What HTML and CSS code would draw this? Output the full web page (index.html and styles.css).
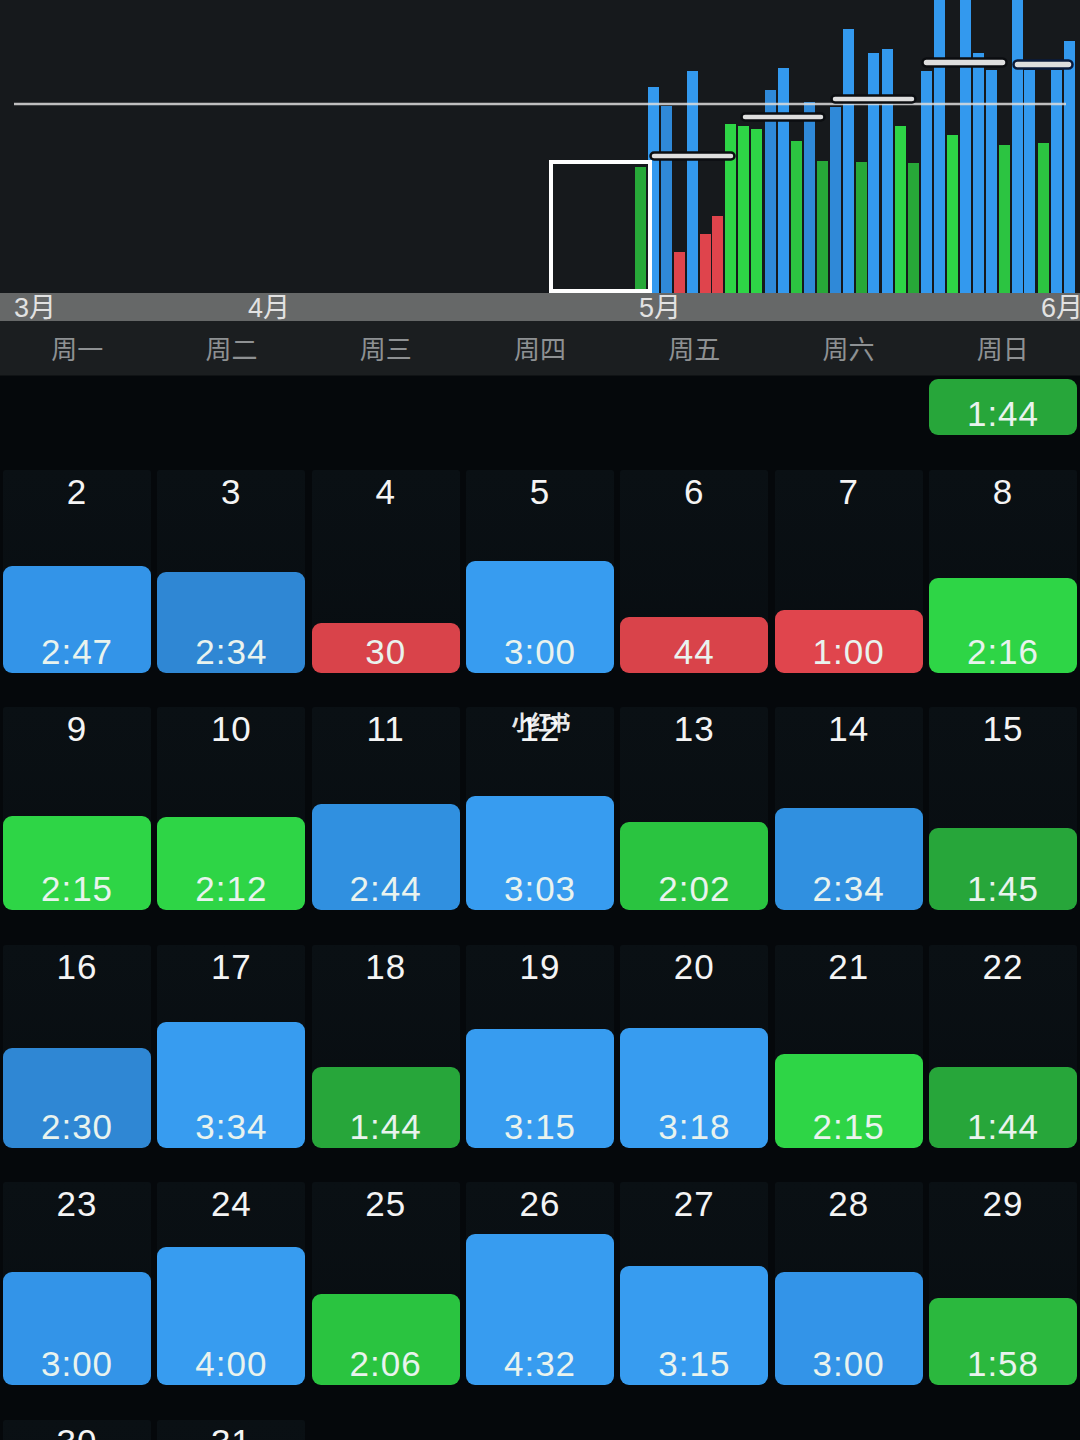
FILE: index.html
```html
<!DOCTYPE html>
<html lang="zh">
<head>
<meta charset="utf-8">
<title>Calendar</title>
<link rel="stylesheet" href="styles.css">
</head>
<body>
<div class="app">
  <div class="chart">
    <svg width="1080" height="293" viewBox="0 0 1080 293" xmlns="http://www.w3.org/2000/svg">
      <rect x="0" y="0" width="1080" height="293" fill="#16191c"/>
      <g>
        <rect x="635" y="167" width="11" height="126" fill="#27a838"/>
        <rect x="648" y="87" width="11" height="206" fill="#3399ee"/>
        <rect x="661" y="106" width="11" height="187" fill="#2f89d8"/>
        <rect x="674" y="252" width="11" height="41" fill="#df444c"/>
        <rect x="687" y="71" width="11" height="222" fill="#3399ee"/>
        <rect x="700" y="234" width="11" height="59" fill="#df444c"/>
        <rect x="712" y="216" width="11" height="77" fill="#df444c"/>
        <rect x="725" y="124" width="11" height="169" fill="#2ed546"/>
        <rect x="738" y="126" width="11" height="167" fill="#2ed546"/>
        <rect x="751" y="129" width="11" height="164" fill="#2ed546"/>
        <rect x="765" y="90" width="11" height="203" fill="#2f89d8"/>
        <rect x="778" y="68" width="11" height="225" fill="#3399ee"/>
        <rect x="791" y="141" width="11" height="152" fill="#2cc441"/>
        <rect x="804" y="102" width="11" height="191" fill="#2f89d8"/>
        <rect x="817" y="161" width="11" height="132" fill="#27a838"/>
        <rect x="830" y="107" width="11" height="186" fill="#2f89d8"/>
        <rect x="843" y="29" width="11" height="264" fill="#3399ee"/>
        <rect x="856" y="162" width="11" height="131" fill="#27a838"/>
        <rect x="868" y="53" width="11" height="240" fill="#3399ee"/>
        <rect x="882" y="49" width="11" height="244" fill="#3399ee"/>
        <rect x="895" y="126" width="11" height="167" fill="#2ed546"/>
        <rect x="908" y="163" width="11" height="130" fill="#27a838"/>
        <rect x="921" y="71" width="11" height="222" fill="#3399ee"/>
        <rect x="934" y="0" width="11" height="293" fill="#3399ee"/>
        <rect x="947" y="135" width="11" height="158" fill="#2ed546"/>
        <rect x="960" y="0" width="11" height="293" fill="#3399ee"/>
        <rect x="973" y="53" width="11" height="240" fill="#3399ee"/>
        <rect x="986" y="70" width="11" height="223" fill="#3399ee"/>
        <rect x="999" y="145" width="11" height="148" fill="#2cc441"/>
        <rect x="1012" y="0" width="11" height="293" fill="#3399ee"/>
        <rect x="1024" y="70" width="11" height="223" fill="#3399ee"/>
        <rect x="1038" y="143" width="11" height="150" fill="#2cc441"/>
        <rect x="1051" y="70" width="11" height="223" fill="#3399ee"/>
        <rect x="1064" y="41" width="11" height="252" fill="#3399ee"/>
      </g>
      <line x1="14" y1="104" x2="1066" y2="104" stroke="#dcdcdc" stroke-width="2.5" stroke-opacity="0.85"/>
      <g fill="#dedede" stroke="#0b0d10" stroke-width="2.5">
        <rect x="650.5" y="152.5" width="84" height="7" rx="3.5"/>
        <rect x="741.5" y="113.5" width="83" height="7" rx="3.5"/>
        <rect x="831.5" y="95.5" width="84" height="7" rx="3.5"/>
        <rect x="922.5" y="58.5" width="84" height="8" rx="4"/>
        <rect x="1013.5" y="60.5" width="59" height="8" rx="4" stroke="#0a1a3a"/>
      </g>
      <rect x="551" y="162" width="99" height="129" fill="none" stroke="#ffffff" stroke-width="4"/>
    </svg>
  </div>

  <div class="months">
    <span class="month m3">3月</span>
    <span class="month m4">4月</span>
    <span class="month m5">5月</span>
    <span class="month m6">6月</span>
  </div>

  <div class="weekdays">
    <div class="wd">周一</div>
    <div class="wd">周二</div>
    <div class="wd">周三</div>
    <div class="wd">周四</div>
    <div class="wd">周五</div>
    <div class="wd">周六</div>
    <div class="wd">周日</div>
  </div>

  <div class="calendar">
    <div class="week partial">
      <div class="empty"></div><div class="empty"></div><div class="empty"></div><div class="empty"></div><div class="empty"></div><div class="empty"></div>
      <div class="pcell"><div class="bar green-d" style="height:56px"><span class="val">1:44</span></div></div>
    </div>

    <div class="week">
      <div class="cell"><div class="day">2</div><div class="bar blue" style="height:107px"><span class="val">2:47</span></div></div>
      <div class="cell"><div class="day">3</div><div class="bar blue-d" style="height:101px"><span class="val">2:34</span></div></div>
      <div class="cell"><div class="day">4</div><div class="bar red" style="height:50px"><span class="val">30</span></div></div>
      <div class="cell"><div class="day">5</div><div class="bar blue-b" style="height:112px"><span class="val">3:00</span></div></div>
      <div class="cell"><div class="day">6</div><div class="bar red" style="height:56px"><span class="val">44</span></div></div>
      <div class="cell"><div class="day">7</div><div class="bar red-b" style="height:63px"><span class="val">1:00</span></div></div>
      <div class="cell"><div class="day">8</div><div class="bar green" style="height:95px"><span class="val">2:16</span></div></div>
    </div>

    <div class="week">
      <div class="cell"><div class="day">9</div><div class="bar green" style="height:94px"><span class="val">2:15</span></div></div>
      <div class="cell"><div class="day">10</div><div class="bar green" style="height:93px"><span class="val">2:12</span></div></div>
      <div class="cell"><div class="day">11</div><div class="bar blue-m" style="height:106px"><span class="val">2:44</span></div></div>
      <div class="cell"><div class="day">12</div><div class="bar blue-b" style="height:114px"><span class="val">3:03</span></div><span class="watermark">小红书</span></div>
      <div class="cell"><div class="day">13</div><div class="bar green-m" style="height:88px"><span class="val">2:02</span></div></div>
      <div class="cell"><div class="day">14</div><div class="bar blue-m" style="height:102px"><span class="val">2:34</span></div></div>
      <div class="cell"><div class="day">15</div><div class="bar green-d" style="height:82px"><span class="val">1:45</span></div></div>
    </div>

    <div class="week">
      <div class="cell"><div class="day">16</div><div class="bar blue-d" style="height:100px"><span class="val">2:30</span></div></div>
      <div class="cell"><div class="day">17</div><div class="bar blue-b" style="height:126px"><span class="val">3:34</span></div></div>
      <div class="cell"><div class="day">18</div><div class="bar green-d" style="height:81px"><span class="val">1:44</span></div></div>
      <div class="cell"><div class="day">19</div><div class="bar blue-b" style="height:119px"><span class="val">3:15</span></div></div>
      <div class="cell"><div class="day">20</div><div class="bar blue-b" style="height:120px"><span class="val">3:18</span></div></div>
      <div class="cell"><div class="day">21</div><div class="bar green" style="height:94px"><span class="val">2:15</span></div></div>
      <div class="cell"><div class="day">22</div><div class="bar green-d" style="height:81px"><span class="val">1:44</span></div></div>
    </div>

    <div class="week">
      <div class="cell"><div class="day">23</div><div class="bar blue" style="height:113px"><span class="val">3:00</span></div></div>
      <div class="cell"><div class="day">24</div><div class="bar blue-b" style="height:138px"><span class="val">4:00</span></div></div>
      <div class="cell"><div class="day">25</div><div class="bar green-m" style="height:91px"><span class="val">2:06</span></div></div>
      <div class="cell"><div class="day">26</div><div class="bar blue-b" style="height:151px"><span class="val">4:32</span></div></div>
      <div class="cell"><div class="day">27</div><div class="bar blue-b" style="height:119px"><span class="val">3:15</span></div></div>
      <div class="cell"><div class="day">28</div><div class="bar blue" style="height:113px"><span class="val">3:00</span></div></div>
      <div class="cell"><div class="day">29</div><div class="bar green-md" style="height:87px"><span class="val">1:58</span></div></div>
    </div>

    <div class="week">
      <div class="cell"><div class="day">30</div></div>
      <div class="cell"><div class="day">31</div></div>
      <div class="empty"></div><div class="empty"></div><div class="empty"></div><div class="empty"></div><div class="empty"></div>
    </div>
  </div>
</div>
</body>
</html>
```

FILE: styles.css
```css
* { box-sizing: border-box; }

html, body {
  margin: 0;
  padding: 0;
  background: #05080b;
  overflow: hidden;
}

body {
  width: 1080px;
  height: 1440px;
  font-family: "Liberation Sans", Arial, "Noto Sans CJK SC", sans-serif;
  color: #f2f2f2;
}

.app {
  width: 1080px;
  height: 1440px;
  display: flex;
  flex-direction: column;
  overflow: hidden;
}

.chart {
  height: 293px;
  flex: none;
}

.chart svg { display: block; }

.months {
  position: relative;
  height: 28px;
  flex: none;
  background: #666868;
}

.month {
  position: absolute;
  top: 0;
  font-family: "Liberation Sans", "Noto Sans CJK SC", sans-serif;
  font-size: 27px;
  line-height: 30px;
  color: #e2e2e2;
  white-space: nowrap;
}

.m3 { left: 14px; }
.m4 { left: 248px; }
.m5 { left: 639px; }
.m6 { left: 1041px; }

.weekdays {
  position: relative;
  height: 55px;
  flex: none;
  display: grid;
  grid-template-columns: repeat(7, 1fr);
  padding: 0 3px;
  column-gap: 6px;
  align-items: center;
  background: #1b1e20;
  border-bottom: 1px solid #101315;
}

.wd {
  text-align: center;
  font-family: "Noto Sans CJK SC", sans-serif;
  font-size: 26px;
  line-height: 30px;
  color: #8e9193;
}

.calendar {
  flex: 1;
  display: flex;
  flex-direction: column;
  row-gap: 34.5px;
  background: #05080b;
  overflow: hidden;
}

.week {
  display: grid;
  grid-template-columns: repeat(7, 1fr);
  padding: 0 3px;
  column-gap: 6.3px;
  height: 203px;
  flex: none;
}

.week.partial {
  height: 59px;
  align-items: end;
}

.pcell {
  display: flex;
  flex-direction: column;
  justify-content: flex-end;
}

.cell {
  position: relative;
  display: flex;
  flex-direction: column;
  background: linear-gradient(#0a1014, #080d11);
  border-radius: 3px 3px 9px 9px;
}

.day {
  padding-top: 2px;
  text-align: center;
  font-size: 35px;
  line-height: 40px;
  letter-spacing: 1px;
  color: #f4f4f4;
}

.bar {
  margin-top: auto;
  border-radius: 9px;
  display: flex;
  align-items: flex-end;
  justify-content: center;
  padding-bottom: 1px;
  overflow: hidden;
}

.val {
  font-size: 35px;
  line-height: 40px;
  letter-spacing: 1px;
  color: #e9f3ee;
}

.blue   { background: #3394e8; }
.blue-b { background: #379cf0; }
.blue-m { background: #3090e0; }
.blue-d { background: #2f87d4; }
.green  { background: #2ed546; }
.green-m { background: #2ac440; }
.green-md { background: #2bb83e; }
.green-d { background: #27a63a; }
.red    { background: #d9434a; }
.red-b  { background: #e0454d; }

.watermark {
  position: absolute;
  top: 1px;
  left: 50%;
  transform: translateX(-50%);
  font-family: "Noto Sans CJK SC", sans-serif;
  font-weight: 700;
  font-size: 21px;
  line-height: 26px;
  color: rgba(255, 255, 255, 0.92);
  letter-spacing: -2px;
  white-space: nowrap;
}
```
